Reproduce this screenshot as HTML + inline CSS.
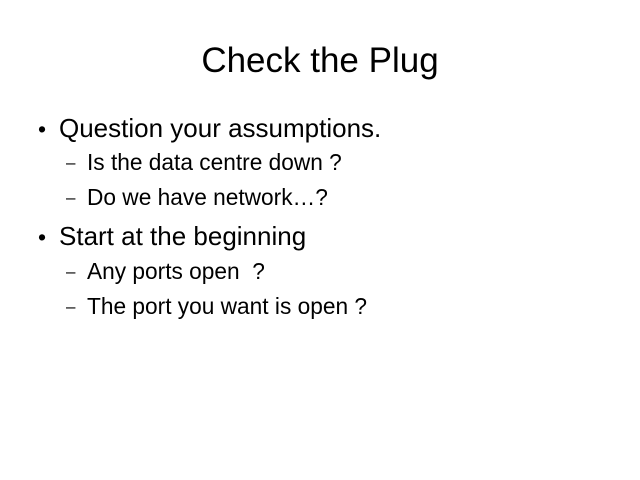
<!DOCTYPE html>
<html><head><meta charset="utf-8"><style>
body{margin:0;width:640px;height:480px;background:#fff;font-family:"Liberation Sans",sans-serif;color:#000;position:relative;overflow:hidden}
div{position:absolute;line-height:1;white-space:pre}
.t{left:0;width:640px;text-align:center;font-size:35px;top:43px}
.m{font-size:26px;left:59px}
.md{font-size:23px;left:38px}
.s{font-size:22.7px;left:87px}
.sd{font-size:17px;left:66px}
</style></head><body>
<div class="t">Check the Plug</div>
<div class="md" style="top:118px">•</div><div class="m" style="top:115px">Question your assumptions.</div>
<div class="sd" style="top:154px">–</div><div class="s" style="top:151px">Is the data centre down ?</div>
<div class="sd" style="top:189px">–</div><div class="s" style="top:186px">Do we have network…?</div>
<div class="md" style="top:226px">•</div><div class="m" style="top:223px">Start at the beginning</div>
<div class="sd" style="top:263px">–</div><div class="s" style="top:260px">Any ports open  ?</div>
<div class="sd" style="top:298px">–</div><div class="s" style="top:295px">The port you want is open ?</div>
</body></html>
